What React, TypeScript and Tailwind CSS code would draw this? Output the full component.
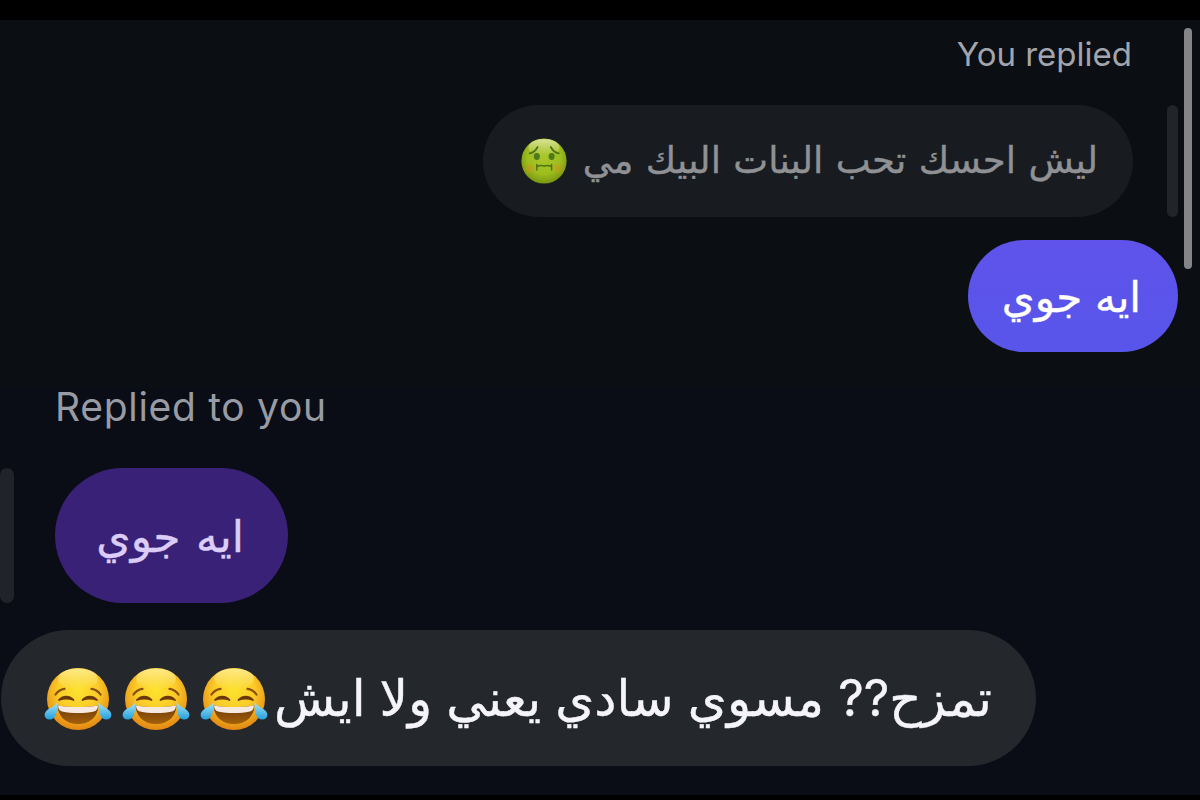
import type { ReactNode } from "react";
import { clsx } from "clsx";

function NauseatedFace({ className }: { className?: string }) {
    return (
        <svg viewBox="0 0 46 46" className={className} fill="none">
            <defs>
                <radialGradient id="sick-skin" cx="0.5" cy="0.42" r="0.62">
                    <stop offset="0" stopColor="#a9c62a" />
                    <stop offset="0.6" stopColor="#9dbd1e" />
                    <stop offset="1" stopColor="#6f8f0c" />
                </radialGradient>
                <linearGradient id="sick-shine" x1="0" y1="0" x2="0" y2="1">
                    <stop offset="0" stopColor="#e9ecb4" stopOpacity="0.8" />
                    <stop offset="1" stopColor="#e9ecb4" stopOpacity="0" />
                </linearGradient>
                <radialGradient id="sick-cheek">
                    <stop offset="0" stopColor="#c9951e" stopOpacity="0.8" />
                    <stop offset="1" stopColor="#c9951e" stopOpacity="0" />
                </radialGradient>
            </defs>
            <circle cx="23" cy="23" r="22.6" fill="url(#sick-skin)" />
            <ellipse cx="23" cy="9.5" rx="15.5" ry="8.5" fill="url(#sick-shine)" />
            <circle cx="9" cy="30.5" r="6" fill="url(#sick-cheek)" />
            <circle cx="37" cy="30.5" r="6" fill="url(#sick-cheek)" />
            <ellipse cx="15.8" cy="18.5" rx="3" ry="3.4" fill="#4f7a1c" />
            <ellipse cx="30.6" cy="18.5" rx="3" ry="3.4" fill="#4f7a1c" />
            <path d="M8.6 15.4C12.2 14.6 15 12.2 16.6 9M37.8 15.4C34.2 14.6 31.4 12.2 29.8 9" stroke="#4f7416" strokeWidth="1.8" strokeLinecap="round" />
            <path d="M15.8 32V26.4M30.6 32V26.4M15.8 28.8C18.5 27.2 21 27.4 23.2 28C25.4 27.4 28 27.2 30.6 28.8" stroke="#4f7416" strokeWidth="1.5" strokeLinecap="round" />
        </svg>
    );
}

function JoyFace({ className }: { className?: string }) {
    return (
        <svg viewBox="0 0 68 64" className={className} fill="none">
            <defs>
                <radialGradient id="joy-skin" cx="0.5" cy="0.36" r="0.65">
                    <stop offset="0" stopColor="#fde32f" />
                    <stop offset="0.5" stopColor="#fbcb28" />
                    <stop offset="1" stopColor="#e28412" />
                </radialGradient>
                <linearGradient id="joy-shine" x1="0" y1="0" x2="0" y2="1">
                    <stop offset="0" stopColor="#fff3a0" stopOpacity="0.8" />
                    <stop offset="1" stopColor="#fff3a0" stopOpacity="0" />
                </linearGradient>
                <linearGradient id="joy-mouth" x1="0" y1="0" x2="0" y2="1">
                    <stop offset="0" stopColor="#6b3a08" />
                    <stop offset="1" stopColor="#a5600a" />
                </linearGradient>
                <linearGradient id="joy-tear" x1="0" y1="0" x2="0" y2="1">
                    <stop offset="0" stopColor="#a4e4f8" />
                    <stop offset="1" stopColor="#229fdd" />
                </linearGradient>
            </defs>
            <circle cx="34" cy="32" r="31" fill="url(#joy-skin)" />
            <ellipse cx="34" cy="12" rx="20" ry="10.5" fill="url(#joy-shine)" />
            <path d="M11.5 27.5C13.5 24.5 16.5 22.4 20.5 21.8M56.5 27.5C54.5 24.5 51.5 22.4 47.5 21.8" stroke="#8a5208" strokeWidth="2.2" strokeLinecap="round" />
            <path d="M15 33C18.5 28.4 26 28.4 29.5 33C25 31.4 19.5 31.4 15 33ZM38.5 33C42 28.4 49.5 28.4 53 33C48.5 31.4 43 31.4 38.5 33Z" fill="#6b3a08" stroke="#6b3a08" strokeWidth="1.8" strokeLinejoin="round" />
            <path d="M13.5 38.5C26 40.5 42 40.5 54.5 38.5C54 49.5 46 57 34 57S14 49.5 13.5 38.5Z" fill="url(#joy-mouth)" />
            <path d="M14 38.5C26 40.5 42 40.5 54 38.5C54 42 52.5 43.8 50 44.4C40 46.6 28 46.6 18 44.4C15.5 43.8 14 42 14 38.5Z" fill="#f6e9df" />
            <path d="M13.4 35.5C13.8 42 12.5 52 6.5 52.6C0.5 53 -1 47.5 2.5 43.8C5.5 40.8 10 40 13.4 35.5Z" fill="url(#joy-tear)" />
            <path d="M54.6 35.5C54.2 42 55.5 52 61.5 52.6C67.5 53 69 47.5 65.5 43.8C62.5 40.8 58 40 54.6 35.5Z" fill="url(#joy-tear)" />
        </svg>
    );
}

function Bubble({ className, children }: { className?: string; children: ReactNode }) {
    return (
        <div dir="rtl" className={clsx("flex items-center rounded-full whitespace-nowrap font-['Inter','DejaVu_Sans',sans-serif] [-webkit-text-stroke:0.4px_currentColor]", className)}>
            {children}
        </div>
    );
}

export default function App() {
    return (
        <main className="relative flex h-[800px] w-[1200px] flex-col overflow-hidden bg-black pt-5 pb-[5px] font-['Inter',sans-serif]">
            {/* Sent reply */}
            <section className="flex h-[368px] flex-col items-end bg-[#0b0e12] pr-[22px]">
                <p className="mt-[14px] mr-[46px] text-[33px] leading-10 text-[#a2a5ad]">You replied</p>
                <div className="mt-[31px] flex h-28 gap-[34px]">
                    <Bubble className="w-[650px] bg-[#181b1f] pr-[35px] text-[37px] text-[#8f9194]">
                        <span className="pb-0.5 [word-spacing:2px]">ليش احسك تحب البنات البيك مي</span>
                        <NauseatedFace className="mr-4 size-[46px]" />
                    </Bubble>
                    <span className="w-[11px] rounded-full bg-[#212428]" />
                </div>
                <Bubble className="mt-[23px] h-28 w-[210px] bg-linear-to-b from-[#5f53ea] to-[#5855ea] pr-[37px] text-[42px] text-white">
                    <span className="[word-spacing:1px]">ايه جوي</span>
                </Bubble>
            </section>

            {/* Received reply */}
            <section className="flex flex-1 flex-col items-start bg-[#0a0d15]">
                <p className="-mt-px ml-[55px] text-[39px] leading-10 tracking-[0.7px] text-[#989ba4]">Replied to you</p>
                <div className="mt-[41px] flex h-[135px] gap-[41px]">
                    <span className="w-[14px] rounded-full bg-[#20232a]" />
                    <Bubble className="w-[233px] bg-[#382176] pr-[44px] text-[44px] text-[#dccdf8]">
                        <span className="[word-spacing:3px]">ايه جوي</span>
                    </Bubble>
                </div>
                <Bubble className="mt-[27px] ml-px h-[136px] w-[1035px] bg-[#24272c] pr-[44px] text-[50px] text-[#f5f5f9]">
                    <span>تمزح?? مسوي سادي يعني ولا ايش</span>
                    <span className="mr-1.5 flex gap-[10px] pt-0.5">
                        <JoyFace className="h-16 w-[68px]" />
                        <JoyFace className="h-16 w-[68px]" />
                        <JoyFace className="h-16 w-[68px]" />
                    </span>
                </Bubble>
            </section>

            <span className="absolute top-7 right-2 h-[241px] w-2 rounded-full bg-[#858587]" />
        </main>
    );
}
